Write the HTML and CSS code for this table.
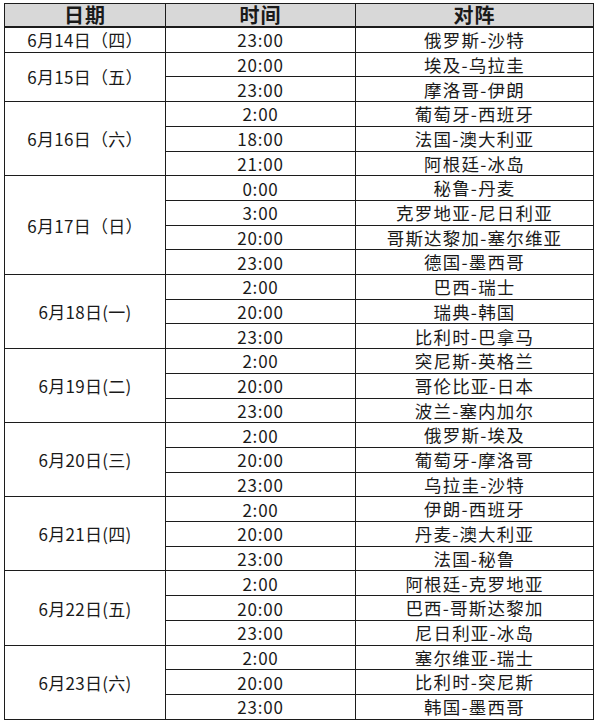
FILE: index.html
```html
<!DOCTYPE html>
<html lang="zh-CN">
<head>
<meta charset="utf-8">
<title>赛程</title>
<link rel="stylesheet" href="styles.css">
</head>
<body>
<div class="sheet">
  <div class="h">日期</div><div class="h">时间</div><div class="h">对阵</div>

  <div class="d s1">6月14日（四）</div><div class="t">23:00</div><div class="m">俄罗斯-沙特</div>

  <div class="d s2">6月15日（五）</div><div class="t">20:00</div><div class="m">埃及-乌拉圭</div>
  <div class="t">23:00</div><div class="m">摩洛哥-伊朗</div>

  <div class="d s3">6月16日（六）</div><div class="t">2:00</div><div class="m">葡萄牙-西班牙</div>
  <div class="t">18:00</div><div class="m">法国-澳大利亚</div>
  <div class="t">21:00</div><div class="m">阿根廷-冰岛</div>

  <div class="d s4">6月17日（日）</div><div class="t">0:00</div><div class="m">秘鲁-丹麦</div>
  <div class="t">3:00</div><div class="m">克罗地亚-尼日利亚</div>
  <div class="t">20:00</div><div class="m">哥斯达黎加-塞尔维亚</div>
  <div class="t">23:00</div><div class="m">德国-墨西哥</div>

  <div class="d s3">6月18日(一)</div><div class="t">2:00</div><div class="m">巴西-瑞士</div>
  <div class="t">20:00</div><div class="m">瑞典-韩国</div>
  <div class="t">23:00</div><div class="m">比利时-巴拿马</div>

  <div class="d s3">6月19日(二)</div><div class="t">2:00</div><div class="m">突尼斯-英格兰</div>
  <div class="t">20:00</div><div class="m">哥伦比亚-日本</div>
  <div class="t">23:00</div><div class="m">波兰-塞内加尔</div>

  <div class="d s3">6月20日(三)</div><div class="t">2:00</div><div class="m">俄罗斯-埃及</div>
  <div class="t">20:00</div><div class="m">葡萄牙-摩洛哥</div>
  <div class="t">23:00</div><div class="m">乌拉圭-沙特</div>

  <div class="d s3">6月21日(四)</div><div class="t">2:00</div><div class="m">伊朗-西班牙</div>
  <div class="t">20:00</div><div class="m">丹麦-澳大利亚</div>
  <div class="t">23:00</div><div class="m">法国-秘鲁</div>

  <div class="d s3">6月22日(五)</div><div class="t">2:00</div><div class="m">阿根廷-克罗地亚</div>
  <div class="t">20:00</div><div class="m">巴西-哥斯达黎加</div>
  <div class="t">23:00</div><div class="m">尼日利亚-冰岛</div>

  <div class="d s3">6月23日(六)</div><div class="t">2:00</div><div class="m">塞尔维亚-瑞士</div>
  <div class="t">20:00</div><div class="m">比利时-突尼斯</div>
  <div class="t">23:00</div><div class="m">韩国-墨西哥</div>
</div>
</body>
</html>
```

FILE: styles.css
```css
html, body {
  margin: 0;
  padding: 0;
  background: #ffffff;
}

body {
  padding: 3px 0 0 4px;
  font-family: "Noto Sans CJK SC", "Noto Sans", sans-serif;
  color: #1a1a1a;
}

.sheet {
  display: grid;
  width: 588px;
  grid-template-columns: 160px 189px 237px;
  grid-template-rows: 23px repeat(28, 23.71px);
  gap: 1px;
  background: #1c1c1c;
  border: 1px solid #1c1c1c;
}

.sheet > div {
  background: #ffffff;
  display: flex;
  align-items: center;
  justify-content: center;
  white-space: nowrap;
  font-size: 17px;
  line-height: 1;
}

.sheet > .h {
  background: #d8d8d8;
  font-size: 20px;
  font-weight: bold;
  letter-spacing: 1px;
  border-bottom: 1px solid #1c1c1c;
}

.d { grid-column: 1; letter-spacing: 0.3px; }
.t { grid-column: 2; letter-spacing: 0.8px; }
.sheet > .m { grid-column: 3; letter-spacing: 1.2px; font-size: 17.5px; }

.s1 { grid-row: span 1; }
.s2 { grid-row: span 2; }
.s3 { grid-row: span 3; }
.s4 { grid-row: span 4; }
```
